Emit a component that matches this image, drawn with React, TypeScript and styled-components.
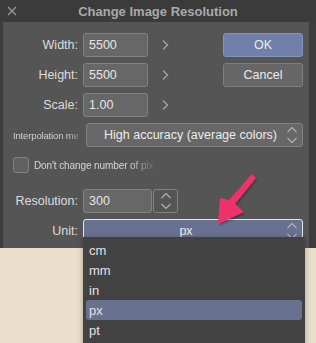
import styled, { createGlobalStyle } from "styled-components";

const GlobalStyle = createGlobalStyle`
  html, body {
    margin: 0;
    padding: 0;
    background: #e8dfcb;
  }
  body {
    font-family: "Liberation Sans", Arial, sans-serif;
  }
`;

const Screen = styled.div`
  position: relative;
  width: 316px;
  height: 343px;
  overflow: hidden;
  background: #e9dfca;
`;

const TitleBar = styled.div`
  height: 22px;
  background: #3b3b3b;
  display: flex;
  align-items: center;
  position: relative;
`;

const Close = styled.div`
  width: 24px;
  display: flex;
  justify-content: center;
  color: #9a9a9a;
`;

const Title = styled.div`
  position: absolute;
  left: 0;
  right: 0;
  text-align: center;
  font-size: 13px;
  font-weight: bold;
  color: #a9a9a9;
  pointer-events: none;
`;

const Frame = styled.div`
  background: #3d3d3d;
  padding: 0 7px 0 3px;
`;

const Body = styled.div`
  background: #555555;
  height: 215px;
  padding-top: 11px;
  padding-right: 6px;
  display: flex;
  flex-direction: column;
`;

const Row = styled.div<{ $top: number }>`
  display: flex;
  align-items: center;
  height: 24px;
  margin-top: ${(p) => p.$top}px;
`;

const Label = styled.div`
  width: 75px;
  margin-right: 5px;
  text-align: right;
  font-size: 12.5px;
  color: #dddddd;
  white-space: nowrap;
`;

const SmallLabel = styled.div`
  width: 70px;
  margin: 0 3px 0 10px;
  font-size: 9.5px;
  letter-spacing: -0.15px;
  color: #d0d0d0;
  white-space: nowrap;
  -webkit-mask-image: linear-gradient(to right, #000 78%, rgba(0, 0, 0, 0.15));
  mask-image: linear-gradient(to right, #000 78%, rgba(0, 0, 0, 0.15));
`;

const Field = styled.div<{ $w: number }>`
  box-sizing: border-box;
  width: ${(p) => p.$w}px;
  height: 24px;
  background: #676767;
  border: 1px solid #828282;
  border-radius: 3px;
  display: flex;
  align-items: center;
  padding-left: 5px;
  font-size: 12.5px;
  color: #e6e6e6;
`;

const Arrow = styled.div`
  width: 24px;
  margin-left: 5px;
  display: flex;
  justify-content: center;
  color: #a8a8a8;
`;

const Button = styled.div<{ $primary?: boolean }>`
  box-sizing: border-box;
  margin-left: auto;
  width: 80px;
  height: 24px;
  border-radius: 3px;
  border: 1px solid ${(p) => (p.$primary ? "#8593bb" : "#7f7f7f")};
  background: ${(p) => (p.$primary ? "#7080a9" : "#666666")};
  color: #ececec;
  font-size: 12.5px;
  display: flex;
  align-items: center;
  justify-content: center;
`;

const Select = styled.div<{ $active?: boolean }>`
  box-sizing: border-box;
  flex: 1;
  height: 24px;
  border-radius: 3px;
  border: 1px solid ${(p) => (p.$active ? "#e4e4e4" : "#828282")};
  background: ${(p) => (p.$active ? "#687190" : "#676767")};
  color: #ececec;
  font-size: 12.5px;
  display: flex;
  align-items: center;
  position: relative;
`;

const SelectText = styled.div<{ $center?: boolean }>`
  flex: 1;
  text-align: center;
  padding-right: ${(p) => (p.$center ? "14px" : "8px")};
`;

const Updown = styled.div`
  position: absolute;
  right: 4px;
  top: 2px;
  color: #b4b4b4;
`;

const Check = styled.div`
  box-sizing: border-box;
  width: 16px;
  height: 16px;
  margin-left: 10px;
  border: 1px solid #828282;
  border-radius: 3px;
  background: #606060;
`;

const CheckText = styled.div`
  margin-left: 5px;
  font-size: 10px;
  letter-spacing: -0.1px;
  color: #d6d6d6;
  white-space: nowrap;
  -webkit-mask-image: linear-gradient(to right, #000 80%, rgba(0, 0, 0, 0.15));
  mask-image: linear-gradient(to right, #000 80%, rgba(0, 0, 0, 0.15));
`;

const Stepper = styled.div`
  box-sizing: border-box;
  width: 25px;
  height: 24px;
  margin-left: 1px;
  border: 1px solid #828282;
  border-radius: 3px;
  display: flex;
  align-items: center;
  justify-content: center;
  color: #b4b4b4;
`;

const Menu = styled.div`
  position: absolute;
  left: 83px;
  top: 237px;
  width: 222px;
  height: 120px;
  background: #424242;
  box-shadow: 0 2px 6px rgba(0, 0, 0, 0.3);
  padding-top: 3px;
  box-sizing: border-box;
`;

const MenuItem = styled.div<{ $selected?: boolean }>`
  height: 20px;
  margin: 0 3px;
  padding-left: 3px;
  border-radius: 3px;
  display: flex;
  align-items: center;
  font-size: 13px;
  color: #e2e2e2;
  background: ${(p) => (p.$selected ? "#687190" : "transparent")};
`;

const Pointer = styled.svg`
  position: absolute;
  left: 0;
  top: 0;
  pointer-events: none;
`;

const Chevron = () => (
  <svg width="8" height="12" viewBox="0 0 8 12">
    <polyline points="2,1.5 6.5,6 2,10.5" fill="none" stroke="currentColor" strokeWidth="1.2" />
  </svg>
);

const UpDownIcon = () => (
  <svg width="12" height="18" viewBox="0 0 12 18">
    <polyline points="1.5,6 6,1.5 10.5,6" fill="none" stroke="currentColor" strokeWidth="1.1" />
    <polyline points="1.5,12 6,16.5 10.5,12" fill="none" stroke="currentColor" strokeWidth="1.1" />
  </svg>
);

const units = ["cm", "mm", "in", "px", "pt"];

export default function App() {
  return (
    <Screen>
      <GlobalStyle />
      <TitleBar>
        <Close>
          <svg width="10" height="10" viewBox="0 0 10 10">
            <path d="M1 1L9 9M9 1L1 9" stroke="currentColor" strokeWidth="1.3" />
          </svg>
        </Close>
        <Title>Change Image Resolution</Title>
      </TitleBar>
      <Frame>
        <Body>
          <Row $top={0}>
            <Label>Width:</Label>
            <Field $w={65}>5500</Field>
            <Arrow>
              <Chevron />
            </Arrow>
            <Button $primary>OK</Button>
          </Row>
          <Row $top={6}>
            <Label>Height:</Label>
            <Field $w={65}>5500</Field>
            <Arrow>
              <Chevron />
            </Arrow>
            <Button>Cancel</Button>
          </Row>
          <Row $top={6}>
            <Label>Scale:</Label>
            <Field $w={65}>1.00</Field>
            <Arrow>
              <Chevron />
            </Arrow>
          </Row>
          <Row $top={6}>
            <SmallLabel>Interpolation me</SmallLabel>
            <Select>
              <SelectText>High accuracy (average colors)</SelectText>
              <Updown>
                <UpDownIcon />
              </Updown>
            </Select>
          </Row>
          <Row $top={6}>
            <Check />
            <CheckText>Don't change number of pix</CheckText>
          </Row>
          <Row $top={12}>
            <Label>Resolution:</Label>
            <Field $w={69}>300</Field>
            <Stepper>
              <UpDownIcon />
            </Stepper>
          </Row>
          <Row $top={6}>
            <Label>Unit:</Label>
            <Select $active>
              <SelectText $center>px</SelectText>
              <Updown>
                <UpDownIcon />
              </Updown>
            </Select>
          </Row>
        </Body>
      </Frame>
      <Menu>
        {units.map((u) => (
          <MenuItem key={u} $selected={u === "px"}>
            {u}
          </MenuItem>
        ))}
      </Menu>
      <Pointer width="316" height="343" viewBox="0 0 316 343">
        <defs>
          <filter id="sh" x="-20%" y="-20%" width="140%" height="140%">
            <feDropShadow dx="1" dy="1.5" stdDeviation="1.2" floodColor="#000" floodOpacity="0.35" />
          </filter>
        </defs>
        <path
          d="M252 174 L256 178 L235 204 L244 212 L218 224 L220 198 L229 200 Z"
          fill="#f0306c"
          filter="url(#sh)"
        />
      </Pointer>
    </Screen>
  );
}
